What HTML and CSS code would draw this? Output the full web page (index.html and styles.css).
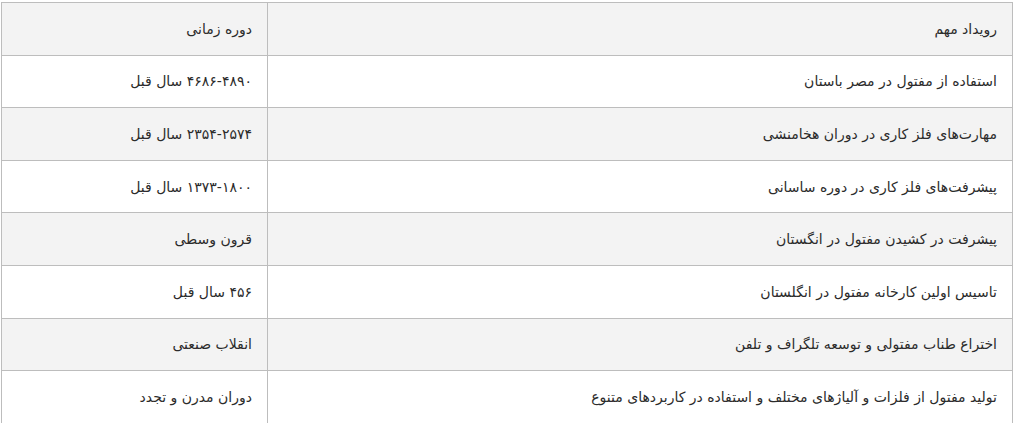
FILE: index.html
```html
<!DOCTYPE html>
<html lang="fa" dir="rtl">
<head>
<meta charset="utf-8">
<link rel="stylesheet" href="styles.css">
</head>
<body>
<table class="events">
  <tbody>
    <tr class="shade"><td class="ev">رویداد مهم</td><td class="per">دوره زمانی</td></tr>
    <tr><td class="ev">استفاده از مفتول در مصر باستان</td><td class="per">۴۶۸۶-۴۸۹۰ سال قبل</td></tr>
    <tr class="shade"><td class="ev">مهارت‌های فلز کاری در دوران هخامنشی</td><td class="per">۲۳۵۴-۲۵۷۴ سال قبل</td></tr>
    <tr><td class="ev">پیشرفت‌های فلز کاری در دوره ساسانی</td><td class="per">۱۳۷۳-۱۸۰۰ سال قبل</td></tr>
    <tr class="shade"><td class="ev">پیشرفت در کشیدن مفتول در انگستان</td><td class="per">قرون وسطی</td></tr>
    <tr><td class="ev">تاسیس اولین کارخانه مفتول در انگلستان</td><td class="per">۴۵۶ سال قبل</td></tr>
    <tr class="shade"><td class="ev">اختراع طناب مفتولی و توسعه تلگراف و تلفن</td><td class="per">انقلاب صنعتی</td></tr>
    <tr><td class="ev">تولید مفتول از فلزات و آلیاژهای مختلف و استفاده در کاربردهای متنوع</td><td class="per">دوران مدرن و تجدد</td></tr>
  </tbody>
</table>
</body>
</html>
```

FILE: styles.css
```css
html, body {
  margin: 0;
  padding: 0;
  background: #ffffff;
}
body {
  padding: 2px 2px 0 2px;
  font-family: "DejaVu Sans", "Noto Sans", sans-serif;
  font-size: 14px;
  color: #2b2b2b;
}
.events {
  width: 1011px;
  border-collapse: collapse;
  table-layout: fixed;
}
.events td {
  border: 1px solid #bdbdbd;
  height: 52.6px;
  padding: 0 15px;
  text-align: right;
  vertical-align: middle;
  box-sizing: border-box;
}
.events td.ev {
  width: 745px;
}
.events td.per {
  width: 266px;
}
.events tr.shade td {
  background: #f3f3f3;
}
```
